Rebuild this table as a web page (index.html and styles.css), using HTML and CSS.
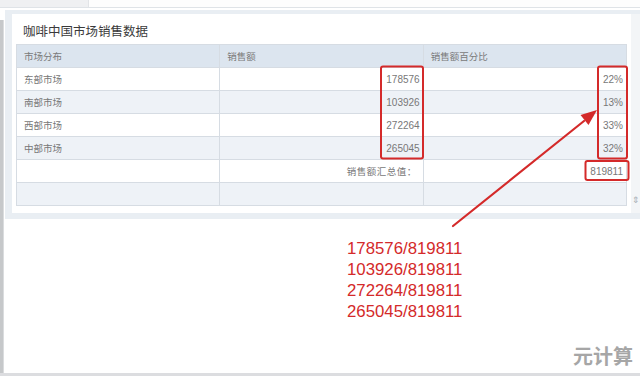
FILE: index.html
```html
<!DOCTYPE html>
<html lang="zh-CN">
<head>
<meta charset="utf-8">
<link rel="stylesheet" href="styles.css">
</head>
<body>
<div class="page">
  <div class="topbar">
    <div class="topbar-left"></div>
    <div class="topbar-right"></div>
  </div>
  <div class="frame">
    <div class="rail"></div>
    <div class="content">
      <div class="panel">
        <div class="card">
          <div class="title">咖啡中国市场销售数据</div>
          <table class="grid">
            <thead>
              <tr><th>市场分布</th><th>销售额</th><th>销售额百分比</th></tr>
            </thead>
            <tbody>
              <tr><td>东部市场</td><td class="num">178576</td><td class="num pct">22%</td></tr>
              <tr class="alt"><td>南部市场</td><td class="num">103926</td><td class="num pct">13%</td></tr>
              <tr><td>西部市场</td><td class="num">272264</td><td class="num pct">33%</td></tr>
              <tr class="alt"><td>中部市场</td><td class="num">265045</td><td class="num pct">32%</td></tr>
              <tr><td></td><td class="num label">销售额汇总值：</td><td class="num pct">819811</td></tr>
              <tr class="alt"><td></td><td></td><td></td></tr>
            </tbody>
          </table>
        </div>
        <div class="scroll"><span class="scroll-icon">⇕</span></div>
      </div>
      <div class="calc">
        <div class="calc-line">178576/819811</div>
        <div class="calc-line">103926/819811</div>
        <div class="calc-line">272264/819811</div>
        <div class="calc-line">265045/819811</div>
      </div>
    </div>
  </div>
  <div class="bottomline"></div>

  <svg class="marks" width="640" height="377" viewBox="0 0 640 377">
    <rect x="381" y="66.5" width="42" height="92" rx="2" fill="none" stroke="#d42a2a" stroke-width="2"/>
    <rect x="598" y="66.5" width="29" height="92" rx="2" fill="none" stroke="#d42a2a" stroke-width="2"/>
    <rect x="585.5" y="161" width="43" height="19" rx="2" fill="none" stroke="#d42a2a" stroke-width="2"/>
    <path d="M453 226 L584 121" stroke="#d42a2a" stroke-width="2.2" stroke-linecap="round"/>
    <polygon points="597,110 588.5,125 580.5,115" fill="#d42a2a"/>
  </svg>
  <div class="watermark">元计算</div>
</div>
</body>
</html>
```

FILE: styles.css
```css
* { box-sizing: border-box; }
html, body { margin: 0; padding: 0; background: #fff; }
body { width: 640px; height: 377px; overflow: hidden; font-family: "Noto Sans CJK SC", "Liberation Sans", sans-serif; }

.page { position: relative; width: 640px; height: 377px; display: flex; flex-direction: column; }

.topbar { height: 8px; display: flex; border-bottom: 1px solid #dfe3e7; }
.topbar-left { width: 89px; background: #eff0f2; border-right: 1px solid #e2e4e7; }
.topbar-right { flex: 1; background: #fdfdfd; }

.frame { display: flex; flex: 1; padding-top: 2px; }
.rail { width: 4px; background: #c6c8ca; border-right: 1px solid #dadcde; margin-top: 10px; }
.content { flex: 1; display: flex; flex-direction: column; }

.panel { margin-left: 1px; background: #e9eef3; padding: 4px 0 6px 7px; display: flex; height: 209px; }
.card { width: 619px; background: #fff; padding: 0 0 0 4px; }
.title { height: 30px; padding: 9px 0 0 7px; font-size: 12.5px; line-height: 16px; color: #3a3a3a; }

.grid { width: 611px; border-collapse: collapse; table-layout: fixed; font-size: 9.5px; color: #777; }
.grid th, .grid td { height: 23px; padding: 0 7px; border: 1px solid #d6dce3; text-align: left; font-weight: normal; white-space: nowrap; }
.grid th { background: #dce5ef; color: #7a7a7a; font-family: "Noto Sans CJK SC", sans-serif; font-size: 9.5px; }
.grid td { font-family: "Noto Sans CJK SC", "Liberation Sans", sans-serif; }
.grid tr.alt td { background: #eef2f7; }
.grid td.num { text-align: right; padding-right: 3px; font-family: "Liberation Sans", sans-serif; font-size: 10px; color: #787878; }
.grid td.label { font-family: "Noto Sans CJK SC", sans-serif; font-size: 9.5px; padding-right: 6px; letter-spacing: 0.5px; }

.scroll { flex: 1; background: #f3f5f7; display: flex; align-items: flex-end; justify-content: center; padding-bottom: 8px; }
.scroll-icon { font-size: 9px; color: #aab0b6; font-family: "DejaVu Sans", sans-serif; }

.calc { margin: 19px 0 0 343px; color: #d42a2a; font-family: "Liberation Sans", sans-serif; }
.calc-line { height: 21px; font-size: 16.8px; line-height: 21px; }

.bottomline { height: 3px; background: #dcdde0; margin-bottom: 1px; }

.marks { position: absolute; left: 0; top: 0; pointer-events: none; }
.watermark { position: absolute; right: 7px; bottom: 7px; font-size: 20px; font-weight: 700; color: #a6a6a6; font-family: "Noto Sans CJK SC", sans-serif; }
```
